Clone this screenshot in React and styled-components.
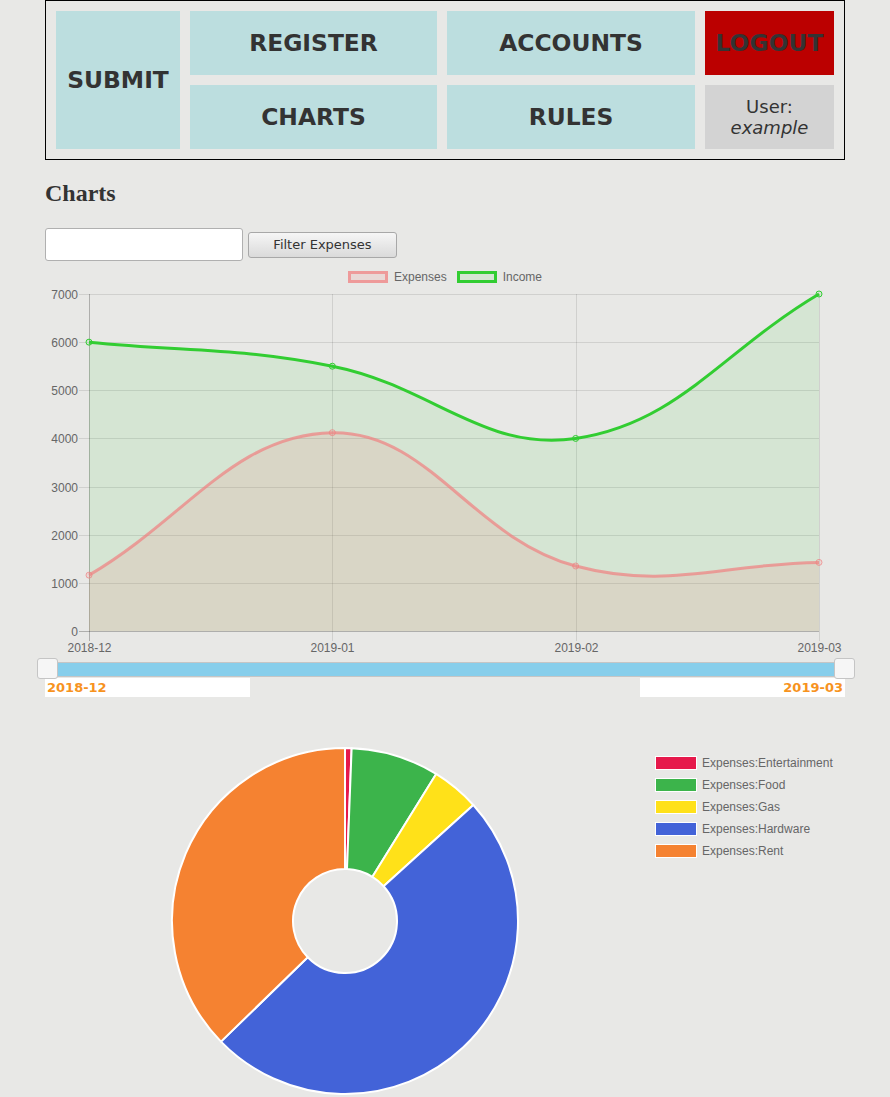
import React from "react";
import styled, { createGlobalStyle } from "styled-components";

const labels = ["2018-12", "2019-01", "2019-02", "2019-03"];
const income = [6000, 5500, 4000, 7000];
const expenses = [1160, 4120, 1350, 1425];

const slices = [
  { name: "Expenses:Entertainment", color: "#e6194b", from: 0, to: 2.2 },
  { name: "Expenses:Food", color: "#3cb44b", from: 2.2, to: 31.8 },
  { name: "Expenses:Gas", color: "#ffe119", from: 31.8, to: 47.9 },
  { name: "Expenses:Hardware", color: "#4363d8", from: 47.9, to: 225.8 },
  { name: "Expenses:Rent", color: "#f58231", from: 225.8, to: 360 },
];

// chart area inside the line chart svg
const AREA = { left: 44, right: 774, top: 9, bottom: 346 };
const xAt = (i) => AREA.left + (i * (AREA.right - AREA.left)) / (labels.length - 1);
const yAt = (v) => AREA.bottom - (v / 7000) * (AREA.bottom - AREA.top);
const clamp = (v, a, b) => Math.max(a, Math.min(b, v));

// same bezier as chart.js v2 (tension 0.4)
function splinePath(values) {
  const pts = values.map((v, i) => ({ x: xAt(i), y: yAt(v) }));
  const cps = pts.map((p, i) => {
    const prev = pts[i - 1] || p;
    const next = pts[i + 1] || p;
    const d01 = Math.hypot(p.x - prev.x, p.y - prev.y);
    const d12 = Math.hypot(next.x - p.x, next.y - p.y);
    const s01 = d01 / (d01 + d12) || 0;
    const s12 = d12 / (d01 + d12) || 0;
    const fa = 0.4 * s01;
    const fb = 0.4 * s12;
    return {
      px: clamp(p.x - fa * (next.x - prev.x), AREA.left, AREA.right),
      py: clamp(p.y - fa * (next.y - prev.y), AREA.top, AREA.bottom),
      nx: clamp(p.x + fb * (next.x - prev.x), AREA.left, AREA.right),
      ny: clamp(p.y + fb * (next.y - prev.y), AREA.top, AREA.bottom),
    };
  });
  let d = `M${pts[0].x},${pts[0].y}`;
  for (let i = 1; i < pts.length; i++) {
    d += ` C${cps[i - 1].nx},${cps[i - 1].ny} ${cps[i].px},${cps[i].py} ${pts[i].x},${pts[i].y}`;
  }
  return { d, pts };
}

function arcPath(cx, cy, r, ri, a0, a1) {
  const rad = (a) => (a * Math.PI) / 180;
  const pt = (rr, a) => [cx + rr * Math.sin(rad(a)), cy - rr * Math.cos(rad(a))];
  const large = a1 - a0 > 180 ? 1 : 0;
  const [x0, y0] = pt(r, a0);
  const [x1, y1] = pt(r, a1);
  const [x2, y2] = pt(ri, a1);
  const [x3, y3] = pt(ri, a0);
  return `M${x0},${y0} A${r},${r} 0 ${large} 1 ${x1},${y1} L${x2},${y2} A${ri},${ri} 0 ${large} 0 ${x3},${y3} Z`;
}

const GlobalStyle = createGlobalStyle`
  body {
    margin: 0;
    background: #e8e8e6;
    color: #333;
    font-family: "DejaVu Sans", Verdana, sans-serif;
  }
`;

const Page = styled.div`
  width: 800px;
  margin: 0 auto;
`;

const Nav = styled.nav`
  display: grid;
  grid-template-columns: 124px 247px 248px 129px;
  grid-template-rows: 64px 64px;
  gap: 10px;
  padding: 10px;
  border: 1px solid #000;
`;

const NavCell = styled.div`
  display: flex;
  align-items: center;
  justify-content: center;
  background: ${(p) => (p.$logout ? "#bb0000" : "#bcdedf")};
  color: #333;
  font-size: 23.4px;
  font-weight: bold;
  grid-row: ${(p) => (p.$tall ? "span 2" : "auto")};
  cursor: pointer;
`;

const UserCell = styled.div`
  display: flex;
  flex-direction: column;
  align-items: center;
  justify-content: center;
  background: #d3d3d3;
  color: #333;
  font-size: 18px;

  em {
    font-style: italic;
  }
`;

const Title = styled.h2`
  margin: 20px 0 21px;
  font-family: "Liberation Serif", "Times New Roman", serif;
  font-size: 24px;
  line-height: 27px;
  color: #333;
`;

const FilterRow = styled.div`
  display: flex;
  align-items: center;
  gap: 5px;
`;

const Input = styled.input`
  box-sizing: border-box;
  width: 198px;
  height: 33px;
  border: 1px solid #b0b0b0;
  border-radius: 3px;
  background: #fff;
`;

const Button = styled.button`
  box-sizing: border-box;
  width: 149px;
  height: 26px;
  border: 1px solid #a8a8a8;
  border-radius: 3px;
  background: linear-gradient(#f6f6f6, #dadada);
  color: #333;
  font-family: "DejaVu Sans", Verdana, sans-serif;
  font-size: 13px;
`;

const Legend = styled.div`
  display: flex;
  justify-content: center;
  gap: 10px;
  padding: 10px 0 2px;
`;

const LegendItem = styled.div`
  display: flex;
  align-items: center;
  gap: 6px;
  height: 12px;
  font-family: "Liberation Sans", Arial, sans-serif;
  font-size: 12px;
  color: #666;
`;

const Swatch = styled.span`
  box-sizing: border-box;
  width: 40px;
  height: 12px;
  border: 3px solid ${(p) => p.$line};
  background: ${(p) => p.$fill};
`;

const ChartSvg = styled.svg`
  display: block;
  font-family: "Liberation Sans", Arial, sans-serif;
`;

const Slider = styled.div`
  position: relative;
  margin-top: 4px;
  height: 13px;
  background: #87ceeb;
  border-top: 1px solid #c5c5c5;
  border-bottom: 1px solid #c5c5c5;
`;

const Handle = styled.span`
  position: absolute;
  top: -5px;
  width: 19px;
  height: 19px;
  border: 1px solid #c5c5c5;
  border-radius: 3px;
  background: #f6f6f6;
  ${(p) => (p.$right ? "right: -10px;" : "left: -8px;")}
`;

const RangeLabels = styled.div`
  display: flex;
  justify-content: space-between;
  margin-top: 1px;
`;

const RangeLabel = styled.div`
  width: 205px;
  height: 19px;
  padding: 0 2px;
  box-sizing: border-box;
  background: #fff;
  color: #f7931e;
  font-size: 13px;
  font-weight: bold;
  line-height: 19px;
  text-align: ${(p) => (p.$right ? "right" : "left")};
`;

const PieSection = styled.div`
  display: flex;
  margin-top: 50px;
`;

const PieLegend = styled.div`
  display: flex;
  flex-direction: column;
  gap: 10px;
  padding: 10px;
`;

const PieSwatch = styled.span`
  width: 40px;
  height: 12px;
  border: 1px solid #fff;
  background: ${(p) => p.$color};
`;

const PieItem = styled(LegendItem)`
  gap: 5px;
`;

function LineChart() {
  const inc = splinePath(income);
  const exp = splinePath(expenses);
  const area = (d, pts) =>
    `${d} L${pts[pts.length - 1].x},${AREA.bottom} L${pts[0].x},${AREA.bottom} Z`;
  const ticks = [0, 1000, 2000, 3000, 4000, 5000, 6000, 7000];

  return (
    <div>
      <Legend>
        <LegendItem>
          <Swatch $line="rgba(240,128,128,0.7)" $fill="rgba(240,128,128,0.15)" />
          Expenses
        </LegendItem>
        <LegendItem>
          <Swatch $line="#32cd32" $fill="rgba(50,205,50,0.1)" />
          Income
        </LegendItem>
      </Legend>
      <ChartSvg width="800" height="373">
        {ticks.map((t) => {
          const y = Math.round(yAt(t)) + 0.5;
          return (
            <g key={t}>
              <line
                x1={AREA.left - 10}
                x2={AREA.right}
                y1={y}
                y2={y}
                stroke={t === 0 ? "rgba(0,0,0,0.25)" : "rgba(0,0,0,0.1)"}
              />
              <text x={AREA.left - 11} y={y} textAnchor="end" dominantBaseline="central" fontSize="12" fill="#666">
                {t}
              </text>
            </g>
          );
        })}
        {labels.map((l, i) => {
          const x = Math.round(xAt(i)) + 0.5;
          return (
            <g key={l}>
              <line
                x1={x}
                x2={x}
                y1={AREA.top}
                y2={AREA.bottom + 10}
                stroke={i === 0 ? "rgba(0,0,0,0.25)" : "rgba(0,0,0,0.1)"}
              />
              <text x={x} y={AREA.bottom + 17} textAnchor="middle" dominantBaseline="central" fontSize="12" fill="#666">
                {l}
              </text>
            </g>
          );
        })}
        <path d={area(inc.d, inc.pts)} fill="rgba(50,205,50,0.1)" />
        <path d={area(exp.d, exp.pts)} fill="rgba(240,128,128,0.15)" />
        <path d={inc.d} fill="none" stroke="#32cd32" strokeWidth="3" />
        <path d={exp.d} fill="none" stroke="rgba(240,128,128,0.7)" strokeWidth="3" />
        {inc.pts.map((p, i) => (
          <circle key={"i" + i} cx={p.x} cy={p.y} r="3" fill="rgba(50,205,50,0.1)" stroke="#32cd32" />
        ))}
        {exp.pts.map((p, i) => (
          <circle key={"e" + i} cx={p.x} cy={p.y} r="3" fill="rgba(240,128,128,0.15)" stroke="rgba(240,128,128,0.7)" />
        ))}
      </ChartSvg>
      <Slider>
        <Handle />
        <Handle $right />
      </Slider>
      <RangeLabels>
        <RangeLabel>2018-12</RangeLabel>
        <RangeLabel $right>2019-03</RangeLabel>
      </RangeLabels>
    </div>
  );
}

function Doughnut() {
  return (
    <PieSection>
      <svg width="600" height="350">
        {slices.map((s) => (
          <path
            key={s.name}
            d={arcPath(300, 174, 173, 52, s.from, s.to)}
            fill={s.color}
            stroke="#fff"
            strokeWidth="2"
            strokeLinejoin="round"
          />
        ))}
      </svg>
      <PieLegend>
        {slices.map((s) => (
          <PieItem key={s.name}>
            <PieSwatch $color={s.color} />
            {s.name}
          </PieItem>
        ))}
      </PieLegend>
    </PieSection>
  );
}

export default function App() {
  return (
    <Page>
      <GlobalStyle />
      <Nav>
        <NavCell $tall>SUBMIT</NavCell>
        <NavCell>REGISTER</NavCell>
        <NavCell>ACCOUNTS</NavCell>
        <NavCell $logout>LOGOUT</NavCell>
        <NavCell>CHARTS</NavCell>
        <NavCell>RULES</NavCell>
        <UserCell>
          <span>User:</span>
          <em>example</em>
        </UserCell>
      </Nav>
      <Title>Charts</Title>
      <FilterRow>
        <Input type="text" />
        <Button>Filter Expenses</Button>
      </FilterRow>
      <LineChart />
      <Doughnut />
    </Page>
  );
}
